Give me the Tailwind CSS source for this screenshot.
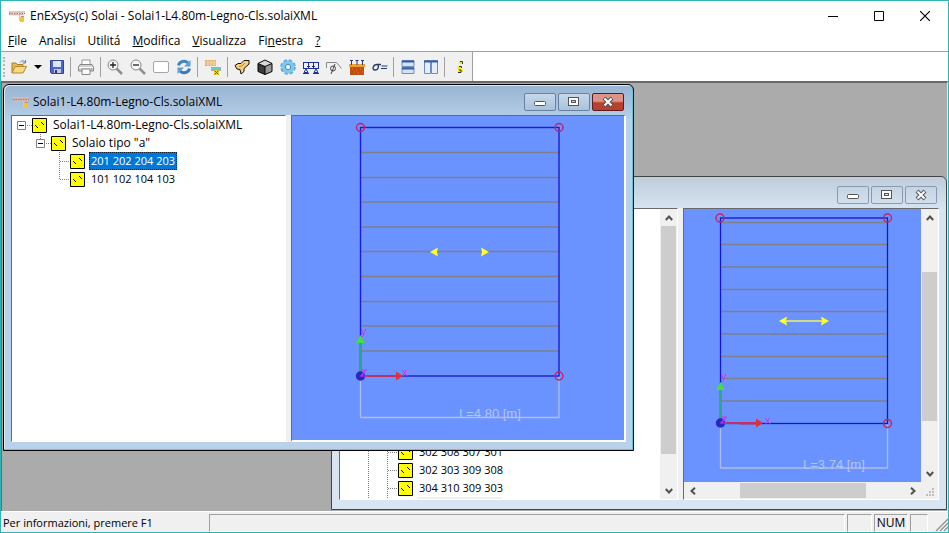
<!DOCTYPE html>
<html lang="it">
<head>
<meta charset="utf-8">
<title>EnExSys(c) Solai - Solai1-L4.80m-Legno-Cls.solaiXML</title>
<script src="https://cdn.jsdelivr.net/npm/@tailwindcss/browser@4"></script>
</head>
<body class="h-screen overflow-hidden">

<svg class="hidden" aria-hidden="true">
  <symbol id="app" viewBox="0 0 16 16">
    <path d="M0 4h16M0 6.500h15" stroke="#e0bdb0" stroke-width="1.400"/>
    <path d="M0 5.500h16" stroke="#b08078" stroke-width="1.400" stroke-dasharray="1.500 1"/>
    <path d="M10.500 7v6" stroke="#d8c8a0"/>
    <path d="M11 9h4v5h-4z" fill="#f5c430"/><path d="M12 8h3v1h-3z" fill="#e08a30"/>
  </symbol>
  <symbol id="node" viewBox="0 0 15 15">
    <path d="M.5.5h14v14H.5z" fill="#ff0" stroke="#000"/>
    <path d="M3 7h1v1H3zM4 8h1v1H4zM5 9h1v1H5zM9 4h1v1H9zM10 5h1v1h-1zM11 6h1v1h-1z" fill="#000"/>
  </symbol>
  <symbol id="up" viewBox="0 0 8 6"><path d="M.8 5 4 1.500 7.200 5" fill="none" stroke="#505050" stroke-width="2"/></symbol>
  <symbol id="down" viewBox="0 0 8 6"><path d="M.8 1 4 4.500 7.200 1" fill="none" stroke="#505050" stroke-width="2"/></symbol>
  <symbol id="axes" viewBox="0 0 60 60" overflow="visible">
    <path d="M10.500 49V15" stroke="#2fa58a" stroke-width="2"/><path d="M6 17 10.500 9l4.500 8z" fill="#3fe03f"/>
    <path d="M10 50h36" stroke="#c03060" stroke-width="2"/><path d="M46 45.500v9l7-4.500z" fill="#e03038"/>
    <circle cx="10.500" cy="50" r="4.700" fill="#2828c0"/>
    <path d="M11 44h5l-5 6h5" fill="none" stroke="#d030f0" stroke-width="1.200"/>
  </symbol>
</svg>

<div class="flex h-full flex-col border border-[#2fb4b8] bg-white font-['Open_Sans','Noto_Sans',sans-serif] text-[12px] leading-[18px] text-black">

  <header class="flex h-[30px] shrink-0 items-center pl-2">
    <svg class="mr-[5px] size-4"><use href="#app"/></svg>
    <h1 class="grow truncate text-[12px]">EnExSys(c) Solai - Solai1-L4.80m-Legno-Cls.solaiXML</h1>
    <button aria-label="Riduci a icona" class="flex h-full w-[46px] items-center justify-center"><svg class="size-[10px]" viewBox="0 0 10 10"><path d="M0 5.500h10" stroke="#000"/></svg></button>
    <button aria-label="Ingrandisci" class="flex h-full w-[46px] items-center justify-center"><svg class="size-[10px]" viewBox="0 0 10 10"><path d="M.5.5h9v9h-9z" fill="none" stroke="#000"/></svg></button>
    <button aria-label="Chiudi" class="flex h-full w-[46px] items-center justify-center"><svg class="size-[10px]" viewBox="0 0 10 10"><path d="m0 0 10 10M10 0 0 10" stroke="#000" stroke-width="1.200"/></svg></button>
  </header>

  <nav class="flex h-[21px] shrink-0 items-center border-b border-[#a0a0a0] pl-px">
    <button class="px-[6px]"><u>F</u>ile</button>
    <button class="px-[6px]">Analisi</button>
    <button class="px-[6px]">Utilitá</button>
    <button class="px-[6px]"><u>M</u>odifica</button>
    <button class="px-[6px]"><u>V</u>isualizza</button>
    <button class="px-[6px]">Fi<u>n</u>estra</button>
    <button class="px-[6px]"><u>?</u></button>
  </nav>

  <div class="flex h-[29px] shrink-0">
    <div role="toolbar" class="flex h-full items-center border-r border-[#a0a0a0] bg-[#f0f0f0]">
      <span class="mx-[2px] h-5 border-l-2 border-dotted border-[#b8b8b8]"></span>
      <button aria-label="Apri" class="flex h-6 w-[23px] items-center justify-center"><svg class="size-4" viewBox="0 0 16 16"><path d="M1 14V4h4l1 1.500h6V8" fill="#e8bd55" stroke="#a87d28"/><path d="M1 14 4 7.500h11.500L12 14z" fill="#f8d880" stroke="#b08830"/><path d="M9 3.500c2-2.500 4-2 5 0M14.500 1v3h-3" fill="none" stroke="#5878a8"/></svg></button>
      <button aria-label="File recenti" class="flex h-6 w-[15px] items-center justify-center"><svg class="h-1 w-2" viewBox="0 0 8 4"><path d="M0 0h8L4 4z"/></svg></button>
      <button aria-label="Salva" class="flex h-6 w-[23px] items-center justify-center"><svg class="size-4" viewBox="0 0 16 16"><path d="M1.500 1.500h13v13h-12l-1-1z" fill="#4c66cc" stroke="#34449c"/><path d="M4 2h8v6H4z" fill="#dce8f8"/><path d="M5 10h7v4H5z" fill="#c8ccd8"/><path d="M6 11h2v3H6z" fill="#283878"/></svg></button>
      <span class="mx-[2px] h-5 w-px bg-[#a0a0a0]"></span>
      <button aria-label="Stampa" class="flex h-6 w-[25px] items-center justify-center"><svg class="size-4" viewBox="0 0 16 16"><path d="M4 6V1h8v5" fill="#fff" stroke="#999"/><path d="M.5 8 2 5.500h12L15.500 8v4H.5z" fill="#d0d0d0" stroke="#888"/><path d="M1 8.500h14" stroke="#fff"/><path d="M4 10h8v5.500H4z" fill="#fafafa" stroke="#888"/><path d="M13 10h1" stroke="#494"/></svg></button>
      <span class="mx-[2px] h-5 w-px bg-[#a0a0a0]"></span>
      <button aria-label="Zoom avanti" class="flex h-6 w-[23px] items-center justify-center"><svg class="size-4" viewBox="0 0 16 16"><path d="m9.500 9.500 5.500 5.500" stroke="#909090" stroke-width="2.500"/><circle cx="6" cy="6" r="5" fill="#f4f8fa" stroke="#888"/><path d="M3 6h6M6 3v6" stroke="#222" stroke-width="1.300"/></svg></button>
      <button aria-label="Zoom indietro" class="flex h-6 w-[23px] items-center justify-center"><svg class="size-4" viewBox="0 0 16 16"><path d="m9.500 9.500 5.500 5.500" stroke="#909090" stroke-width="2.500"/><circle cx="6" cy="6" r="5" fill="#f4f8fa" stroke="#888"/><path d="M3 6h6" stroke="#222" stroke-width="1.300"/></svg></button>
      <button aria-label="Zoom finestra" class="flex h-6 w-[23px] items-center justify-center"><svg class="size-4" viewBox="0 0 16 16"><rect x=".5" y="2.500" width="15" height="11" rx="1.500" fill="#fff" stroke="#a4a4ac"/></svg></button>
      <button aria-label="Aggiorna" class="flex h-6 w-[23px] items-center justify-center"><svg class="size-4" viewBox="0 0 16 16"><path d="M2.500 6.500C3.500 2 9 1 12 4" fill="none" stroke="#3f83bf" stroke-width="3"/><path d="M14.500 1v6.500H8z" fill="#5b9fd4"/><path d="M13.500 9.500C12.500 14 7 15 4 12" fill="none" stroke="#3f78b4" stroke-width="3"/><path d="M1.500 15V8.500H8z" fill="#5b9fd4"/></svg></button>
      <span class="mx-[2px] h-5 w-px bg-[#a0a0a0]"></span>
      <button aria-label="Solaio" class="flex h-6 w-[25px] items-center justify-center"><svg class="size-4" viewBox="0 0 16 16"><path d="M0 1h11v6H0z" fill="#e8a860"/><path d="M0 3h11M0 5h11M3 1v6M6 1v6M9 1v6" stroke="#fbe8cc" stroke-width=".7"/><path d="M6 9h10" stroke="#68c8c0" stroke-width="2"/><path d="M6 11h10" stroke="#806838"/><path d="M9 11h5v5H9z" fill="#e8d820"/><path d="m9.500 11.500 4 4m0-4-4 4" stroke="#706020"/></svg></button>
      <span class="mx-[2px] h-5 w-px bg-[#a0a0a0]"></span>
      <button aria-label="Sezione" class="flex h-6 w-[23px] items-center justify-center"><svg class="size-4" viewBox="0 0 16 16"><path d="M1 6.500 4 4.500h3l3-3h5v3.500l-5 4.500v3L7 15l-1-4.500L3 10z" fill="#f8d27a" stroke="#111"/><path d="m5 7.500 3-.5 3-3" fill="none" stroke="#b88028"/></svg></button>
      <button aria-label="Vista 3D" class="flex h-6 w-[23px] items-center justify-center"><svg class="size-4" viewBox="0 0 16 16"><path d="M1 4.500v8L8 15.500v-8z" fill="#3c3c3c"/><path d="M15 4.500v8L8 15.500v-8z" fill="#989898"/><path d="m1 4.500 7-3.500 7 3.500-7 3z" fill="#d8d8d8"/><path d="m1 4.500 7-3.500 7 3.500v8l-7 3-7-3zM1 4.500l7 3 7-3M8 7.500v8" fill="none" stroke="#000"/></svg></button>
      <button aria-label="Impostazioni" class="flex h-6 w-[23px] items-center justify-center"><svg class="size-4" viewBox="0 0 16 16"><circle cx="8" cy="8" r="6.500" fill="#72bce8" stroke="#5cacdc" stroke-width="2.600" stroke-dasharray="3.200 1.900"/><circle cx="8" cy="8" r="6.200" fill="#80c6ee"/><circle cx="8" cy="8" r="2.700" fill="#eef6fb" stroke="#4292c8"/></svg></button>
      <button aria-label="Schema di carico" class="flex h-6 w-[23px] items-center justify-center"><svg class="size-4" viewBox="0 0 16 16"><path d="M0 3.500h16M0 9.500h16M.5 3v7M5.500 3v7M10.500 3v7M15.500 3v7M4 7.500h3M9 7.500h3M5 8.500h1M10 8.500h1" stroke="#1c2f9c"/><path d="m3 10 2 3.500H1zM13 10l2 3.500h-4zM0 14.500h6M10 14.500h6" fill="none" stroke="#1c2f9c"/></svg></button>
      <button aria-label="Diametri" class="flex h-6 w-[23px] items-center justify-center"><svg class="size-4" viewBox="0 0 16 16"><path d="M.5 9V3.500h10l5 6" fill="none" stroke="#888"/><circle cx="7" cy="9.500" r="2.500" fill="none" stroke="#444"/><path d="M9 5 5 15" stroke="#444"/></svg></button>
      <button aria-label="Connettori" class="flex h-6 w-[23px] items-center justify-center"><svg class="size-4" viewBox="0 0 16 16"><path d="M0 5h16v3H0z" fill="#f0a030"/><path d="M1 8h14v8H1z" fill="#c05010"/><path d="M3 10h1M7 11h1M11 10h1M5 13h1M9 14h1M13 13h1" stroke="#f08838"/><path d="M1 1.500h3M6.500 1.500h3M12 1.500h3M2.500 1v5M8 1v5M13.500 1v5" stroke="#203880"/></svg></button>
      <button aria-label="Tensioni" class="flex h-6 w-[23px] items-center justify-center"><svg class="size-4" viewBox="0 0 16 16"><path d="M9 5.500H5C1 5.500-.5 11 3 11c3.500 0 4.500-4.500 2-5.500" fill="none" stroke="#28386c" stroke-width="1.300"/><path d="M9.500 7h6M9 9.500h6" stroke="#28386c" stroke-width="1.200"/></svg></button>
      <span class="mx-[2px] h-5 w-px bg-[#a0a0a0]"></span>
      <button aria-label="Affianca orizzontalmente" class="flex h-6 w-[23px] items-center justify-center"><svg class="size-4" viewBox="0 0 16 16"><path d="M2 1.500h12v6H2zM2 8.500h12v6H2z" fill="#d4e2f6" stroke="#6c8cc4"/><path d="M2 2.500h12M2 9.500h12" stroke="#3a5ca4" stroke-width="2"/></svg></button>
      <button aria-label="Affianca verticalmente" class="flex h-6 w-[23px] items-center justify-center"><svg class="size-4" viewBox="0 0 16 16"><path d="M1.500 1.500h6v13h-6zM8.500 1.500h6v13h-6z" fill="#e4eefa" stroke="#6c8cc4"/><path d="M1 2.500h14" stroke="#3a5ca4" stroke-width="2"/></svg></button>
      <span class="mx-[2px] h-5 w-px bg-[#a0a0a0]"></span>
      <button aria-label="Informazioni" class="flex h-6 w-[25px] items-center justify-center"><svg class="size-4" viewBox="0 0 16 16"><path d="M7 2h3v3H7zM6 7h4l-1 3h2v3H6v-3H5z" fill="#f6f000"/><path d="M8 2.500h2.500V5M7 7.500h2.500V9M7 11h2v2.500H6" fill="none" stroke="#333"/></svg></button>
    </div>
  </div>

  <main class="relative grow overflow-hidden border-t-2 border-r border-l border-t-[#696969] border-r-[#e8e8e8] border-l-[#696969] bg-[#ababab]">

    <section aria-label="Documento 2" class="absolute top-[93px] left-[329px] flex h-[334px] w-[616px] flex-col rounded-t-md border border-[#444] bg-[#d7e4f2] bg-linear-to-b from-[#bfcddb] to-[#d7e4f2] to-10% px-[7px] pb-[9px]">
      <div class="flex h-[31px] shrink-0 items-center justify-end gap-[2px] pt-1 pr-[2px]">
        <button aria-label="Riduci" class="flex h-[18px] w-8 items-center justify-center rounded-xs border border-[#8a9ab4]"><svg class="h-3 w-3" viewBox="0 0 12 12"><rect x=".5" y="5.500" width="11" height="4" rx="1" fill="#fff" stroke="#555"/></svg></button>
        <button aria-label="Ingrandisci" class="flex h-[18px] w-8 items-center justify-center rounded-xs border border-[#8a9ab4]"><svg class="h-3 w-3" viewBox="0 0 12 12"><rect x=".5" y="1.500" width="10" height="8" fill="#fff" stroke="#555"/><rect x="3.500" y="4.500" width="4" height="2" fill="#d7e4f2" stroke="#555"/></svg></button>
        <button aria-label="Chiudi" class="flex h-[18px] w-8 items-center justify-center rounded-xs border border-[#8a9ab4]"><svg class="h-3 w-3" viewBox="0 0 12 12"><path d="m2 2 8 8m0-8-8 8" stroke="#555" stroke-width="4"/><path d="m2.500 2.500 7 7m0-7-7 7" stroke="#fff" stroke-width="2"/></svg></button>
      </div>
      <div class="flex min-h-0 grow gap-[5px] bg-[#f0f0f0]">
        <div class="flex w-[339px] shrink-0 border border-t-[#696969] border-r-white border-b-white border-l-[#696969] bg-white">
          <ul class="grow overflow-hidden pt-[234px] text-[11px]">
            <li class="flex h-[18px] items-center"><svg class="h-[18px] w-[58px]" viewBox="0 0 58 18"><path d="M28.500 0v18M47.500 0v18M48 9.500h10" stroke="#808080" stroke-dasharray="1 1"/></svg><svg class="size-[15px]"><use href="#node"/></svg><span class="ml-1 px-[2px]">302 308 307 301</span></li>
            <li class="flex h-[18px] items-center"><svg class="h-[18px] w-[58px]" viewBox="0 0 58 18"><path d="M28.500 0v18M47.500 0v18M48 9.500h10" stroke="#808080" stroke-dasharray="1 1"/></svg><svg class="size-[15px]"><use href="#node"/></svg><span class="ml-1 px-[2px]">302 303 309 308</span></li>
            <li class="flex h-[18px] items-center"><svg class="h-[18px] w-[58px]" viewBox="0 0 58 18"><path d="M28.500 0v18M47.500 0v18M48 9.500h10" stroke="#808080" stroke-dasharray="1 1"/></svg><svg class="size-[15px]"><use href="#node"/></svg><span class="ml-1 px-[2px]">304 310 309 303</span></li>
            <li class="flex h-[18px] items-center"><svg class="h-[18px] w-[58px]" viewBox="0 0 58 18"><path d="M28.500 0v18M47.500 0v18M48 9.500h10" stroke="#808080" stroke-dasharray="1 1"/></svg><svg class="size-[15px]"><use href="#node"/></svg><span class="ml-1 h-full w-[85px] bg-[#f0f0f0]"></span></li>
          </ul>
          <div class="flex w-[17px] shrink-0 flex-col items-center bg-[#f0f0f0]">
            <div class="flex h-[17px] items-center"><svg class="h-[6px] w-2"><use href="#up"/></svg></div>
            <div class="h-[228px] w-[15px] bg-[#cdcdcd]"></div>
            <div class="mt-auto flex h-[17px] items-center"><svg class="h-[6px] w-2"><use href="#down"/></svg></div>
          </div>
        </div>
        <div class="grid min-w-0 grow grid-cols-[1fr_17px] grid-rows-[1fr_17px] border border-t-[#696969] border-r-white border-b-white border-l-[#696969] bg-[#f0f0f0]">
          <div class="overflow-hidden bg-[#6b93ff]">
            <svg class="h-[273px] w-[237px]" viewBox="684 209 237 273">
              <path d="M720 222.500h168M720 244.500h168M720 267h168M720 289.500h168M720 311.500h168M720 334h168M720 356.500h168M720 378.500h168M720 401h168" stroke="#7d8089" stroke-width="1.400"/>
              <path d="M720.500 423v45h167v-45" fill="none" stroke="#a9bdf0" stroke-width="1.300"/>
              <rect x="720.500" y="218" width="167" height="205.500" fill="none" stroke="#1414c8" stroke-width="1.300"/>
              <g fill="none" stroke="#c8205c" stroke-width="1.400"><circle cx="720" cy="218" r="4"/><circle cx="887.500" cy="218" r="4"/><circle cx="887.500" cy="423.500" r="4"/></g>
              <path d="M784 321h40" stroke="#f4f060" stroke-width="1.500"/><path d="m779 321 8-4.500-1 4.500 1 4.500zM829 321l-8-4.500 1 4.500-1 4.500z" fill="#ff2"/>
              <path d="M740 423.500h20" stroke="#c03060" stroke-width="2"/>
              <use href="#axes" x="710" y="373" width="60" height="60"/>
              <text x="721" y="380" font-size="11" font-family="Liberation Sans" fill="#d030f0">y</text>
              <text x="765" y="424" font-size="11" font-family="Liberation Sans" fill="#d030f0">x</text>
              <text x="803" y="469" font-size="13" font-family="Liberation Sans" fill="#b4c4f0">L=3.74 [m]</text>
            </svg>
          </div>
          <div class="flex flex-col items-center">
            <div class="flex h-[17px] items-center"><svg class="h-[6px] w-2"><use href="#up"/></svg></div>
            <div class="mt-[46px] h-[149px] w-[15px] bg-[#cdcdcd]"></div>
            <div class="mt-auto flex h-[17px] items-center"><svg class="h-[6px] w-2"><use href="#down"/></svg></div>
          </div>
          <div class="flex items-center">
            <div class="flex w-[17px] justify-center"><svg class="h-2 w-[6px]" viewBox="0 0 6 8"><path d="M5 .8 1.500 4 5 7.200" fill="none" stroke="#505050" stroke-width="2"/></svg></div>
            <div class="ml-[39px] h-[15px] w-[126px] bg-[#cdcdcd]"></div>
            <div class="ml-auto flex w-[17px] justify-center"><svg class="h-2 w-[6px]" viewBox="0 0 6 8"><path d="M1 .8 4.500 4 1 7.200" fill="none" stroke="#505050" stroke-width="2"/></svg></div>
          </div>
          <svg class="size-[17px]" viewBox="0 0 17 17"><path d="M11 6h2v2h-2zM8 9h2v2H8zM11 9h2v2h-2zM5 12h2v2H5zM8 12h2v2H8zM11 12h2v2h-2z" fill="#bfbfbf"/></svg>
        </div>
      </div>
    </section>

    <section aria-label="Solai1-L4.80m-Legno-Cls.solaiXML" class="absolute top-px left-px flex h-[367px] w-[631px] flex-col rounded-t-md border border-black bg-[#b9d1ea] bg-linear-to-b from-[#98b4d2] to-[#b9d1ea] to-10% px-[7px] pb-2 shadow-[inset_-1px_-1px_0_#5cc8dc,inset_1px_1px_0_#dceaf6]">
      <div class="flex h-[30px] shrink-0 items-center gap-[2px] pt-1 pr-[2px]">
        <svg class="ml-[2px] size-4"><use href="#app"/></svg>
        <h2 class="ml-[2px] grow truncate">Solai1-L4.80m-Legno-Cls.solaiXML</h2>
        <button aria-label="Riduci" class="flex h-[18px] w-8 items-center justify-center rounded-xs border border-[#6b7f9e] bg-linear-to-b from-[#c6d8ea] to-[#a9c2dc]"><svg class="h-3 w-3" viewBox="0 0 12 12"><rect x=".5" y="5.500" width="11" height="4" rx="1" fill="#fff" stroke="#555"/></svg></button>
        <button aria-label="Ingrandisci" class="flex h-[18px] w-8 items-center justify-center rounded-xs border border-[#6b7f9e] bg-linear-to-b from-[#c6d8ea] to-[#a9c2dc]"><svg class="h-3 w-3" viewBox="0 0 12 12"><rect x=".5" y="1.500" width="10" height="8" fill="#fff" stroke="#555"/><rect x="3.500" y="4.500" width="4" height="2" fill="#b9d1ea" stroke="#555"/></svg></button>
        <button aria-label="Chiudi" class="flex h-[18px] w-8 items-center justify-center rounded-xs border border-[#5a1c20] bg-linear-to-b from-[#dd9488] from-45% to-[#b8402c] to-55%"><svg class="h-3 w-3" viewBox="0 0 12 12"><path d="m2 2 8 8m0-8-8 8" stroke="#555" stroke-width="4"/><path d="m2.500 2.500 7 7m0-7-7 7" stroke="#fff" stroke-width="2"/></svg></button>
      </div>
      <div class="flex min-h-0 grow gap-[5px] bg-[#f0f0f0]">
        <div class="w-[275px] shrink-0 border border-t-[#696969] border-r-white border-b-white border-l-[#696969] bg-white">
          <ul>
            <li class="flex h-[18px] items-center"><svg class="h-[18px] w-5" viewBox="0 0 20 18"><path d="M5.500 5.500h8v8h-8z" fill="#fff" stroke="#808080"/><path d="M7 9.500h5" stroke="#000"/><path d="M15 9.500h5" stroke="#808080" stroke-dasharray="1 1"/></svg><svg class="size-[15px]"><use href="#node"/></svg><span class="ml-1 px-[2px]">Solai1-L4.80m-Legno-Cls.solaiXML</span></li>
            <li class="flex h-[18px] items-center"><svg class="h-[18px] w-[39px]" viewBox="0 0 39 18"><path d="M28.500 0v5M34 9.500h5" stroke="#808080" stroke-dasharray="1 1"/><path d="M24.500 5.500h8v8h-8z" fill="#fff" stroke="#808080"/><path d="M26 9.500h5" stroke="#000"/></svg><svg class="size-[15px]"><use href="#node"/></svg><span class="ml-1 px-[2px]">Solaio tipo "a"</span></li>
            <li class="flex h-[18px] items-center text-[11px]"><svg class="h-[18px] w-[58px]" viewBox="0 0 58 18"><path d="M47.500 0v18M48 9.500h10" stroke="#808080" stroke-dasharray="1 1"/></svg><svg class="size-[15px]"><use href="#node"/></svg><span class="ml-1 bg-[#0078d7] px-[2px] text-white outline outline-dotted -outline-offset-1 outline-[#123]">201 202 204 203</span></li>
            <li class="flex h-[18px] items-center text-[11px]"><svg class="h-[18px] w-[58px]" viewBox="0 0 58 18"><path d="M47.500 0v10M48 9.500h10" stroke="#808080" stroke-dasharray="1 1"/></svg><svg class="size-[15px]"><use href="#node"/></svg><span class="ml-1 px-[2px]">101 102 104 103</span></li>
          </ul>
        </div>
        <div class="min-w-0 grow overflow-hidden border border-t-[#696969] border-r-2 border-r-white border-b-2 border-b-white border-l-[#696969] bg-[#6b93ff]">
          <svg class="h-[324px] w-[332px]" viewBox="292 116 332 324">
            <path d="M360 152.500h199M360 177.500h199M360 202h199M360 227h199M360 251.500h199M360 276.500h199M360 301.500h199M360 326h199M360 351h199" stroke="#7d8089" stroke-width="1.400"/>
            <path d="M360.500 376v41.500h198.500V376" fill="none" stroke="#a9bdf0" stroke-width="1.300"/>
            <rect x="360.500" y="127.500" width="198.500" height="248.500" fill="none" stroke="#1c1cd0" stroke-width="1.400"/>
            <g fill="none" stroke="#c8205c" stroke-width="1.400"><circle cx="360.500" cy="127.500" r="4"/><circle cx="559" cy="127.500" r="4"/><circle cx="559" cy="376" r="4"/></g>
            <path d="m430 252 8-4.500-1 4.500 1 4.500zM489 252l-8-4.500 1 4.500-1 4.500z" fill="#ff2"/>
            <use href="#axes" x="350" y="326" width="60" height="60"/>
            <text x="361" y="335" font-size="11" font-family="Liberation Sans" fill="#d030f0">y</text>
            <text x="402" y="376" font-size="11" font-family="Liberation Sans" fill="#d030f0">x</text>
            <text x="459" y="418" font-size="13" font-family="Liberation Sans" fill="#b4c4f0">L=4.80 [m]</text>
          </svg>
        </div>
      </div>
    </section>
  </main>

  <footer class="flex h-[21px] shrink-0 gap-[2px] border-t border-white bg-[#f0f0f0] pt-[2px]">
    <span class="w-[206px] pl-[2px] text-[11px]">Per informazioni, premere F1</span>
    <span class="grow border border-t-[#a0a0a0] border-r-white border-b-white border-l-[#a0a0a0]"></span>
    <span class="w-[25px] border border-t-[#a0a0a0] border-r-white border-b-white border-l-[#a0a0a0]"></span>
    <span class="w-[34px] border border-t-[#a0a0a0] border-r-white border-b-white border-l-[#a0a0a0] text-center leading-4">NUM</span>
    <span class="w-[18px] border border-t-[#a0a0a0] border-r-white border-b-white border-l-[#a0a0a0]"></span>
    <svg class="ml-1 h-[18px] w-[14px]" viewBox="0 0 14 18"><path d="M2 17 14 5M6 17l8-8M10 17l4-4" stroke="#909090" stroke-width="1.300"/></svg>
  </footer>
</div>
</body>
</html>
